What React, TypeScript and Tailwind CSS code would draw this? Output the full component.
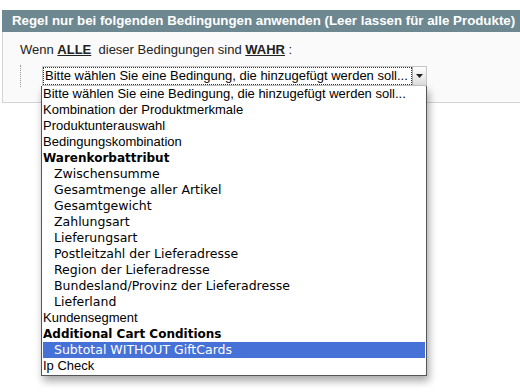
import React from "react";

const items: { label: string; kind: "plain" | "group" | "child"; selected?: boolean }[] = [
  { label: "Bitte wählen Sie eine Bedingung, die hinzugefügt werden soll...", kind: "plain" },
  { label: "Kombination der Produktmerkmale", kind: "plain" },
  { label: "Produktunterauswahl", kind: "plain" },
  { label: "Bedingungskombination", kind: "plain" },
  { label: "Warenkorbattribut", kind: "group" },
  { label: "Zwischensumme", kind: "child" },
  { label: "Gesamtmenge aller Artikel", kind: "child" },
  { label: "Gesamtgewicht", kind: "child" },
  { label: "Zahlungsart", kind: "child" },
  { label: "Lieferungsart", kind: "child" },
  { label: "Postleitzahl der Lieferadresse", kind: "child" },
  { label: "Region der Lieferadresse", kind: "child" },
  { label: "Bundesland/Provinz der Lieferadresse", kind: "child" },
  { label: "Lieferland", kind: "child" },
  { label: "Kundensegment", kind: "plain" },
  { label: "Additional Cart Conditions", kind: "group" },
  { label: "Subtotal WITHOUT GiftCards", kind: "child", selected: true },
  { label: "Ip Check", kind: "plain" },
];

export default function App() {
  return (
    <div className="relative w-[520px] h-[392px] overflow-hidden bg-white pt-[10px] pl-[2px] font-['Liberation_Sans',Arial,sans-serif]">
      <div className="w-[540px]">
        <div className="h-[22px] bg-[#6e8891] pl-[10px] text-[13.3px] font-bold leading-[22px] text-white">
          Regel nur bei folgenden Bedingungen anwenden (Leer lassen für alle Produkte)
        </div>
        <div className="h-[71px] border border-t-0 border-[#d4d4d4] bg-[#fafafa] pl-[17px] pt-[9px] text-[13px] text-[#222]">
          <div className="leading-[17px]">
            Wenn <b className="underline">ALLE</b>&nbsp; dieser Bedingungen sind <b className="underline">WAHR</b> :
          </div>
          <div className="mt-[8px] flex">
            <div className="-mt-[1px] h-[22px] w-0 border-l border-dotted border-[#999]" />
            <div className="ml-[21px] flex h-[20px] w-[385px] items-center border border-[#c4c4c4] bg-white">
              <div className="flex-1 truncate border border-dotted border-[#333] pl-[1px] leading-[16px] text-black">
                Bitte wählen Sie eine Bedingung, die hinzugefügt werden soll...
              </div>
              <div className="flex h-full w-[14px] items-center justify-center border-l border-[#aaa] bg-gradient-to-b from-[#fdfdfd] to-[#dedede]">
                <svg width="7" height="4" viewBox="0 0 7 4">
                  <path d="M0 0h7L3.5 4z" fill="#222" />
                </svg>
              </div>
            </div>
          </div>
        </div>
      </div>

      <div className="absolute left-[41px] top-[86px] w-[386px] border border-[#555] border-t-0 bg-white pb-[1px] shadow-[2px_5px_8px_rgba(0,0,0,0.35)]">
        {items.map((it) => (
          <div
            key={it.label}
            className={
              it.kind === "plain"
                ? "h-[16px] pl-[1px] text-[13px] leading-[16px] text-black"
                : it.kind === "group"
                ? "h-[16px] pl-[1px] font-['DejaVu_Sans',sans-serif] text-[12px] font-bold leading-[16px] text-black"
                : it.selected
                ? "mx-[1px] h-[16px] bg-[#4671d6] pl-[11px] font-['DejaVu_Sans',sans-serif] text-[12.5px] leading-[16px] text-white"
                : "h-[16px] pl-[12px] font-['DejaVu_Sans',sans-serif] text-[12.5px] leading-[16px] text-black"
            }
          >
            {it.label}
          </div>
        ))}
      </div>
    </div>
  );
}
